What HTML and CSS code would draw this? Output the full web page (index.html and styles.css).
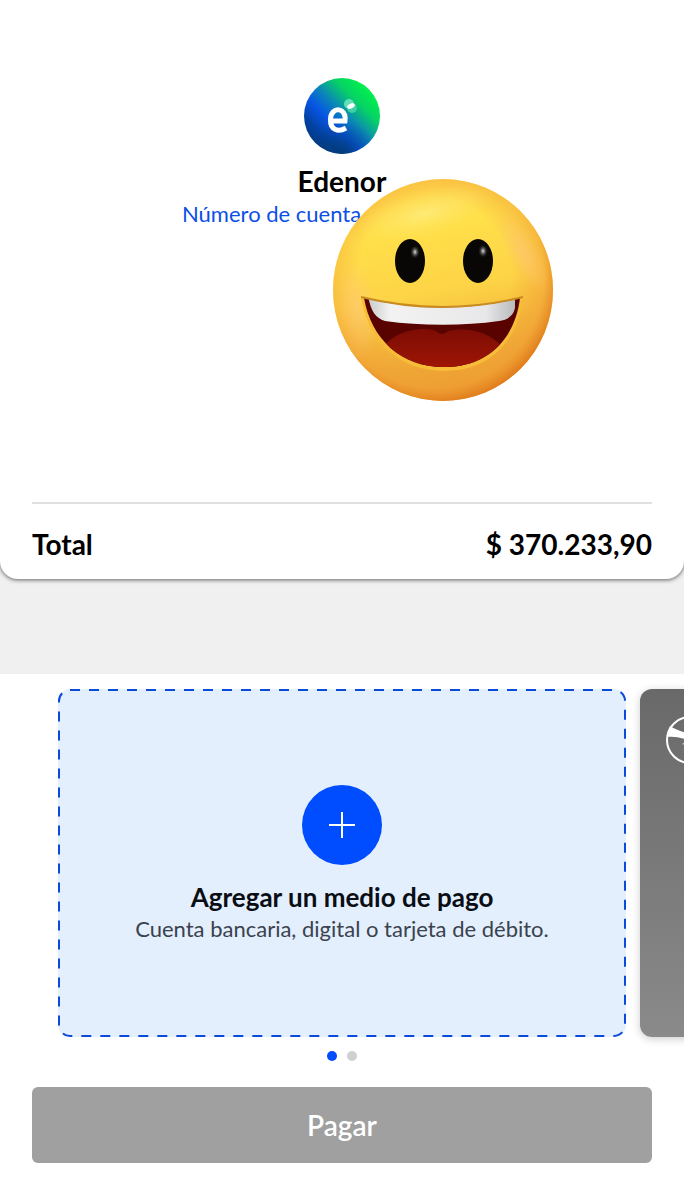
FILE: index.html
```html
<!DOCTYPE html>
<html lang="es">
<head>
    <meta charset="UTF-8">
    <meta name="viewport" content="width=device-width, initial-scale=1.0">
    <title>Pagar Edenor</title>
    <link rel="stylesheet" href="styles.css">
</head>
<body>
    <section class="bill">
        <svg class="bill-logo" viewBox="0 0 76 76" role="img" aria-label="Edenor">
            <defs>
                <linearGradient id="logo-bg" x1="0.15" y1="0.85" x2="0.85" y2="0.15">
                    <stop offset="0" stop-color="#023a86"/>
                    <stop offset="0.14" stop-color="#0342a4"/>
                    <stop offset="0.34" stop-color="#0755e6"/>
                    <stop offset="0.54" stop-color="#0b86b8"/>
                    <stop offset="0.78" stop-color="#06d265"/>
                    <stop offset="1" stop-color="#02f04c"/>
                </linearGradient>
                <radialGradient id="logo-shade" cx="0.5" cy="1" r="0.45">
                    <stop offset="0" stop-color="#023a6e" stop-opacity="0.8"/>
                    <stop offset="1" stop-color="#023a6e" stop-opacity="0"/>
                </radialGradient>
            </defs>
            <circle cx="38" cy="38" r="38" fill="url(#logo-bg)"/>
            <circle cx="38" cy="38" r="38" fill="url(#logo-shade)"/>
            <path d="M27 43H41C43 29 27 28 26.500 41C26 53 35 54 42 50" fill="none" stroke="#fff" stroke-width="5"/>
            <circle cx="45" cy="26" r="5" fill="#5ee0b4"/>
            <circle cx="48" cy="30" r="5" fill="#3fcfa4"/>
            <ellipse cx="47" cy="28" rx="4" ry="2.5" transform="rotate(-25 47 28)" fill="#fff"/>
        </svg>
        <h1 class="bill-name">Edenor</h1>
        <a class="bill-account" href="#">Número de cuenta</a>

        <svg class="emoji" viewBox="0 0 220 222" aria-hidden="true">
            <defs>
                <linearGradient id="face" x1="0.4" y1="0" x2="0.6" y2="1">
                    <stop offset="0" stop-color="#fdd249"/>
                    <stop offset="0.2" stop-color="#ffe04a"/>
                    <stop offset="0.5" stop-color="#fdd446"/>
                    <stop offset="0.8" stop-color="#eeaa35"/>
                    <stop offset="1" stop-color="#e8962b"/>
                </linearGradient>
                <radialGradient id="face-edge" cx="0.46" cy="0.44" r="0.58">
                    <stop offset="0.6" stop-color="#f6a33a" stop-opacity="0"/>
                    <stop offset="0.86" stop-color="#f2a035" stop-opacity="0.55"/>
                    <stop offset="1" stop-color="#dd7416"/>
                </radialGradient>
                <radialGradient id="face-shine">
                    <stop offset="0" stop-color="#fff08a" stop-opacity="0.7"/>
                    <stop offset="1" stop-color="#ffe767" stop-opacity="0"/>
                </radialGradient>
                <radialGradient id="cheek">
                    <stop offset="0" stop-color="#ffc97a" stop-opacity="0.6"/>
                    <stop offset="1" stop-color="#ffc97a" stop-opacity="0"/>
                </radialGradient>
                <radialGradient id="eye-shine">
                    <stop offset="0" stop-color="#e4e4e4"/>
                    <stop offset="1" stop-color="#111" stop-opacity="0"/>
                </radialGradient>
                <linearGradient id="teeth" x1="0" y1="0" x2="1" y2="0">
                    <stop offset="0" stop-color="#c9cacb"/>
                    <stop offset="0.15" stop-color="#f2f2f2"/>
                    <stop offset="0.8" stop-color="#e8e8ea"/>
                    <stop offset="1" stop-color="#b9babc"/>
                </linearGradient>
                <linearGradient id="tongue" x1="0" y1="0" x2="0" y2="1">
                    <stop offset="0" stop-color="#7c0c04"/>
                    <stop offset="1" stop-color="#a51705"/>
                </linearGradient>
                <clipPath id="mouth">
                    <path d="M31 119Q110 138 187 119C182 160 155 188 111 188C68 188 38 160 31 119Z"/>
                </clipPath>
            </defs>
            <ellipse cx="110" cy="111" rx="110" ry="111" fill="url(#face)"/>
            <ellipse cx="110" cy="111" rx="110" ry="111" fill="url(#face-edge)"/>
            <ellipse cx="92" cy="34" rx="70" ry="24" transform="rotate(-14 92 34)" fill="url(#face-shine)"/>
            <ellipse cx="24" cy="130" rx="20" ry="50" transform="rotate(-8 24 130)" fill="url(#cheek)"/>
            <ellipse cx="190" cy="72" rx="16" ry="46" transform="rotate(-28 190 72)" fill="url(#cheek)"/>
            <path d="M30 118C37 161 67 190 111 190C156 190 183 161 188 118" fill="none" stroke="#f7bd38" stroke-width="4"/>
            <path d="M31 119Q110 138 187 119C182 160 155 188 111 188C68 188 38 160 31 119Z" fill="#590300"/>
            <g clip-path="url(#mouth)">
                <path d="M45 178C55 150 92 147 103 152Q109 158 115 152C134 147 165 153 175 178L150 195H70Z" fill="url(#tongue)"/>
                <path d="M35 117H182V129C180 138 173 141 166 142C131 147 88 147 52 142C42 139 38 132 35 117Z" fill="url(#teeth)"/>
            </g>
            <path d="M28 118Q110 138 190 118" fill="none" stroke="#c98a20" stroke-width="2"/>
            <ellipse cx="77" cy="82" rx="15" ry="22" fill="#080706"/>
            <ellipse cx="145" cy="82" rx="15" ry="22" fill="#080706"/>
            <ellipse cx="82" cy="73" rx="5" ry="7" fill="url(#eye-shine)"/>
            <ellipse cx="150" cy="72" rx="5" ry="7" fill="url(#eye-shine)"/>
        </svg>

        <div class="bill-total">
            <span>Total</span>
            <span>$ 370.233,90</span>
        </div>
    </section>

    <main class="payment">
        <div class="carousel">
            <button class="add-method" type="button">
                <svg class="add-border" aria-hidden="true"><rect x="1" y="1" rx="11"/></svg>
                <span class="add-icon">
                    <svg width="26" height="26" viewBox="0 0 26 26" aria-hidden="true">
                        <path d="M13 0V26M0 13H26" stroke="#fff" stroke-width="2"/>
                    </svg>
                </span>
                <strong class="add-title">Agregar un medio de pago</strong>
                <span class="add-text">Cuenta bancaria, digital o tarjeta de débito.</span>
            </button>
            <div class="method-card">
                <svg width="52" height="52" viewBox="0 0 52 52" aria-hidden="true">
                    <circle cx="25" cy="26" r="23" fill="none" stroke="#fff" stroke-width="2"/>
                    <path d="M5 12C10 15 16 18 26 20V27C18 24 10 22 2 23Z" fill="#fff"/>
                    <path d="M17 30L26 27V32Z" fill="#fff"/>
                </svg>
            </div>
        </div>

        <div class="dots">
            <span class="dot active"></span>
            <span class="dot"></span>
        </div>

        <button class="pay-button" type="button">Pagar</button>
    </main>
</body>
</html>
```
FILE: styles.css
```css
* {
    box-sizing: border-box;
}
body {
    margin: 0;
    background-color: #f0f0f0;
    color: #000;
    font-family: Lato, "Open Sans", sans-serif;
}
button {
    border: none;
    font-family: inherit;
    cursor: pointer;
}

/* Bill */
.bill {
    position: relative;
    display: flex;
    flex-direction: column;
    align-items: center;
    padding: 78px 32px 0;
    background-color: #fff;
    border-radius: 0 0 18px 18px;
    box-shadow: 0 1px 4px rgba(0, 0, 0, 0.6);
}
.bill-logo {
    width: 76px;
    height: 76px;
}
.bill-name {
    margin: 9px 0 0;
    font-size: 28px;
    line-height: 36px;
    font-weight: 700;
}
.bill-account {
    width: 320px;
    max-width: 100%;
    color: #0a50e6;
    font-size: 22px;
    line-height: 30px;
    text-decoration: none;
}
.emoji {
    position: absolute;
    top: 179px;
    left: calc(50% - 9px);
    width: 220px;
    height: 222px;
}
.bill-total {
    display: flex;
    justify-content: space-between;
    align-self: stretch;
    margin-top: 273px;
    padding: 22px 0 17px;
    border-top: 2px solid #e0e0e0;
    font-size: 28px;
    line-height: 36px;
    font-weight: 700;
}

/* Payment methods */
.payment {
    margin-top: 95px;
    padding-bottom: 36px;
    background-color: #fff;
}
.carousel {
    display: flex;
    gap: 14px;
    padding: 15px 0 10px 58px;
    overflow: hidden;
}
.add-method {
    position: relative;
    flex: 0 0 calc(100% - 58px);
    display: flex;
    flex-direction: column;
    align-items: center;
    padding: 96px 16px 92px;
    background-color: #e3effd;
    border-radius: 12px;
}
.add-border {
    position: absolute;
    top: 0;
    left: 0;
    width: 100%;
    height: 100%;
}
.add-border rect {
    width: calc(100% - 2px);
    height: calc(100% - 2px);
    fill: none;
    stroke: #0a4bdc;
    stroke-width: 2;
    stroke-dasharray: 10 9;
}
.add-icon {
    display: flex;
    align-items: center;
    justify-content: center;
    width: 80px;
    height: 80px;
    margin-bottom: 16px;
    background-color: #004dff;
    border-radius: 50%;
}
.add-title {
    color: #0a0e14;
    font-size: 26px;
    line-height: 32px;
    font-weight: 700;
}
.add-text {
    color: #3a424d;
    font-size: 22px;
    line-height: 32px;
}
.method-card {
    flex: 0 0 calc(100% - 58px);
    padding: 25px;
    background: linear-gradient(#696969, #8a8a8a);
    border-radius: 12px;
    box-shadow: 0 2px 8px rgba(0, 0, 0, 0.2);
}
.dots {
    display: flex;
    justify-content: center;
    gap: 10px;
    padding: 4px 0 26px;
}
.dot {
    width: 10px;
    height: 10px;
    background-color: #d0d0d0;
    border-radius: 50%;
}
.dot.active {
    background-color: #004dff;
}
.pay-button {
    display: block;
    width: calc(100% - 64px);
    margin: 0 32px;
    padding: 20px;
    background-color: #a0a0a0;
    border-radius: 6px;
    color: #fff;
    font-size: 28px;
    line-height: 36px;
    font-weight: 600;
}
```
